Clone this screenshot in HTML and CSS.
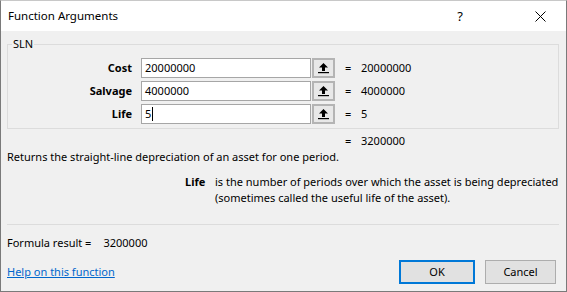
FILE: index.html
```html
<!DOCTYPE html>
<html>
<head>
<meta charset="utf-8">
<link rel="stylesheet" href="styles.css">
</head>
<body>
<div class="window">
  <div class="titlebar">
    <span class="title">Function Arguments</span>
    <span class="help">?</span>
    <span class="close"><svg width="11" height="11" viewBox="0 0 11 11"><path d="M0.5 0.5 L10.5 10.5 M10.5 0.5 L0.5 10.5" stroke="#000" stroke-width="1" fill="none"/></svg></span>
  </div>
  <div class="content">
    <div class="group">
      <span class="legend">SLN</span>
      <div class="row">
        <span class="arg-label">Cost</span>
        <div class="input">20000000</div>
        <span class="collapse"><svg width="11" height="12" viewBox="0 0 11 12"><path d="M5.5 1 L10 5.5 L7 5.5 L7 9 L4 9 L4 5.5 L1 5.5 Z" fill="#000"/><rect x="0" y="10" width="11" height="1.2" fill="#000"/></svg></span>
        <span class="eq">=</span><span class="val">20000000</span>
      </div>
      <div class="row">
        <span class="arg-label">Salvage</span>
        <div class="input">4000000</div>
        <span class="collapse"><svg width="11" height="12" viewBox="0 0 11 12"><path d="M5.5 1 L10 5.5 L7 5.5 L7 9 L4 9 L4 5.5 L1 5.5 Z" fill="#000"/><rect x="0" y="10" width="11" height="1.2" fill="#000"/></svg></span>
        <span class="eq">=</span><span class="val">4000000</span>
      </div>
      <div class="row">
        <span class="arg-label">Life</span>
        <div class="input">5<span class="caret"></span></div>
        <span class="collapse"><svg width="11" height="12" viewBox="0 0 11 12"><path d="M5.5 1 L10 5.5 L7 5.5 L7 9 L4 9 L4 5.5 L1 5.5 Z" fill="#000"/><rect x="0" y="10" width="11" height="1.2" fill="#000"/></svg></span>
        <span class="eq">=</span><span class="val">5</span>
      </div>
    </div>
    <div class="result-row"><span class="eq">=</span><span class="val">3200000</span></div>
    <p class="desc">Returns the straight-line depreciation of an asset for one period.</p>
    <div class="arg-help">
      <span class="arg-name">Life</span>
      <span class="arg-text">is the number of periods over which the asset is being depreciated<br>(sometimes called the useful life of the asset).</span>
    </div>
    <div class="sep"></div>
    <div class="formula">Formula result =<span class="formula-val">3200000</span></div>
    <div class="footer">
      <a class="help-link" href="#">Help on this function</a>
      <div class="buttons">
        <span class="btn btn-ok">OK</span>
        <span class="btn btn-cancel">Cancel</span>
      </div>
    </div>
  </div>
</div>
</body>
</html>
```
FILE: styles.css
```css
* { box-sizing: border-box; }
html, body { margin: 0; padding: 0; }
body {
  font-family: "Noto Sans", "Open Sans", sans-serif;
  font-size: 11px;
  line-height: 16px;
  color: #000;
  background: #fff;
}
.window {
  width: 567px;
  height: 292px;
  border: 1px solid #7a7a7a;
  border-top-color: #c8c8c8;
  background: #f0f0f0;
  display: flex;
  flex-direction: column;
}
.titlebar {
  flex-shrink: 0;
  height: 30px;
  background: #fff;
  display: flex;
  align-items: center;
  padding-left: 7px;
}
.title { flex: 1; font-size: 11.5px; }
.help { font-size: 13px; margin-right: 72px; }
.close { width: 11px; height: 11px; margin-right: 20px; display: flex; }
.content {
  padding: 0 7px 0 6px;
  flex: 1;
  white-space: nowrap;
}
.group {
  position: relative;
  margin-top: 13px;
  border: 1px solid #dcdcdc;
  padding: 13px 0 4px 0;
}
.legend {
  position: absolute;
  top: -9px;
  left: 4px;
  padding: 0 1px;
  background: #f0f0f0;
}
.row {
  display: flex;
  align-items: center;
  height: 20px;
  margin-bottom: 3px;
}
.row:last-child { margin-bottom: 0; }
.arg-label {
  width: 124px;
  text-align: right;
  font-weight: bold;
  margin-right: 9px;
}
.input {
  width: 170px;
  height: 20px;
  background: #fff;
  border: 1px solid #a6a6a6;
  padding: 1px 3px;
  line-height: 16px;
  display: flex;
  align-items: center;
}
.caret {
  display: inline-block;
  width: 1px;
  height: 14px;
  background: #000;
  margin-left: 1px;
}
.collapse {
  width: 23px;
  height: 20px;
  margin-left: 1px;
  background: #e8e8e8;
  border: 2px solid #b4b4b4;
  display: flex;
  align-items: center;
  justify-content: center;
}
.eq {
  display: inline-block;
  width: 16px;
  margin-left: 10px;
}
.result-row {
  margin-top: 4px;
  padding-left: 328px;
  display: flex;
}
.desc { margin: 0; }
.arg-help {
  margin-top: 9px;
  display: flex;
  padding-left: 178px;
}
.arg-name { font-weight: bold; width: 30px; }
.sep {
  margin-top: 18px;
  height: 1px;
  background: #dcdcdc;
}
.formula { margin-top: 10px; }
.formula-val { margin-left: 12px; }
.footer {
  margin-top: 9px;
  display: flex;
  align-items: center;
  justify-content: space-between;
}
.help-link {
  color: #0066cc;
  text-decoration: underline;
}
.buttons { display: flex; gap: 10px; margin-right: 3px; }
.btn {
  height: 24px;
  background: #e1e1e1;
  border: 1px solid #adadad;
  display: flex;
  align-items: center;
  justify-content: center;
}
.btn-ok { width: 76px; border: 2px solid #0078d7; }
.btn-cancel { width: 71px; }
```
